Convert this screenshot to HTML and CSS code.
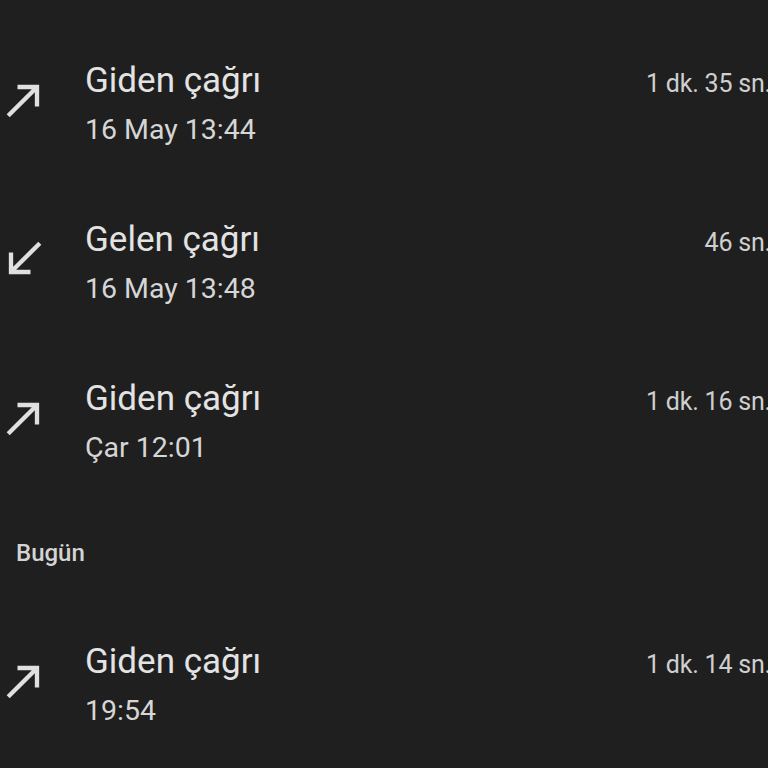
FILE: index.html
```html
<!DOCTYPE html>
<html lang="tr">
<head>
<meta charset="utf-8">
<link rel="stylesheet" href="styles.css">
</head>
<body>
<div class="page">
  <div class="row">
    <div class="icon"><svg viewBox="0 0 24 24" width="52" height="52"><path d="M9 5v2h6.59L4 18.59 5.41 20 17 8.41V15h2V5z"/></svg></div>
    <div class="main">
      <div class="top"><span class="title">Giden çağrı</span><span class="dur">1 dk. 35 sn.</span></div>
      <div class="sub">16 May 13:44</div>
    </div>
  </div>
  <div class="row">
    <div class="icon"><svg viewBox="0 0 24 24" width="52" height="52"><path d="M20 5.41L18.59 4 7 15.59V9H5v10h10v-2H8.41z"/></svg></div>
    <div class="main">
      <div class="top"><span class="title">Gelen çağrı</span><span class="dur">46 sn.</span></div>
      <div class="sub">16 May 13:48</div>
    </div>
  </div>
  <div class="row">
    <div class="icon"><svg viewBox="0 0 24 24" width="52" height="52"><path d="M9 5v2h6.59L4 18.59 5.41 20 17 8.41V15h2V5z"/></svg></div>
    <div class="main">
      <div class="top"><span class="title">Giden çağrı</span><span class="dur">1 dk. 16 sn.</span></div>
      <div class="sub">Çar 12:01</div>
    </div>
  </div>
  <div class="section">Bugün</div>
  <div class="row">
    <div class="icon"><svg viewBox="0 0 24 24" width="52" height="52"><path d="M9 5v2h6.59L4 18.59 5.41 20 17 8.41V15h2V5z"/></svg></div>
    <div class="main">
      <div class="top"><span class="title">Giden çağrı</span><span class="dur">1 dk. 14 sn.</span></div>
      <div class="sub">19:54</div>
    </div>
  </div>
</div>
</body>
</html>
```
FILE: styles.css
```css
html, body {
  margin: 0;
  padding: 0;
  background: #1f1f1f;
  overflow: hidden;
}
body {
  width: 768px;
  height: 768px;
  font-family: Roboto, "Noto Sans", sans-serif;
  color: #e3e3e3;
}
.page {
  width: 771px;
  padding-top: 25px;
}
.row {
  display: flex;
  padding: 36px 0;
}
.icon {
  width: 85px;
  flex: none;
}
.icon svg {
  display: block;
  margin-left: -2px;
  margin-top: 13px;
  fill: #e0e0e0;
}
.main {
  flex: 1;
  display: flex;
  flex-direction: column;
  gap: 11px;
}
.top {
  display: flex;
  align-items: baseline;
  justify-content: space-between;
  height: 40px;
}
.title {
  font-size: 35px;
  line-height: 40px;
  color: #e3e3e3;
}
.dur {
  font-size: 25px;
  line-height: 30px;
  letter-spacing: -0.2px;
  color: #cfcfcf;
}
.sub {
  font-size: 28.5px;
  line-height: 36px;
  color: #d6d6d6;
}
.section {
  padding: 37px 0 39px 16px;
  font-size: 24px;
  line-height: 28px;
  font-weight: 500;
  color: #d4d4d4;
}
```
